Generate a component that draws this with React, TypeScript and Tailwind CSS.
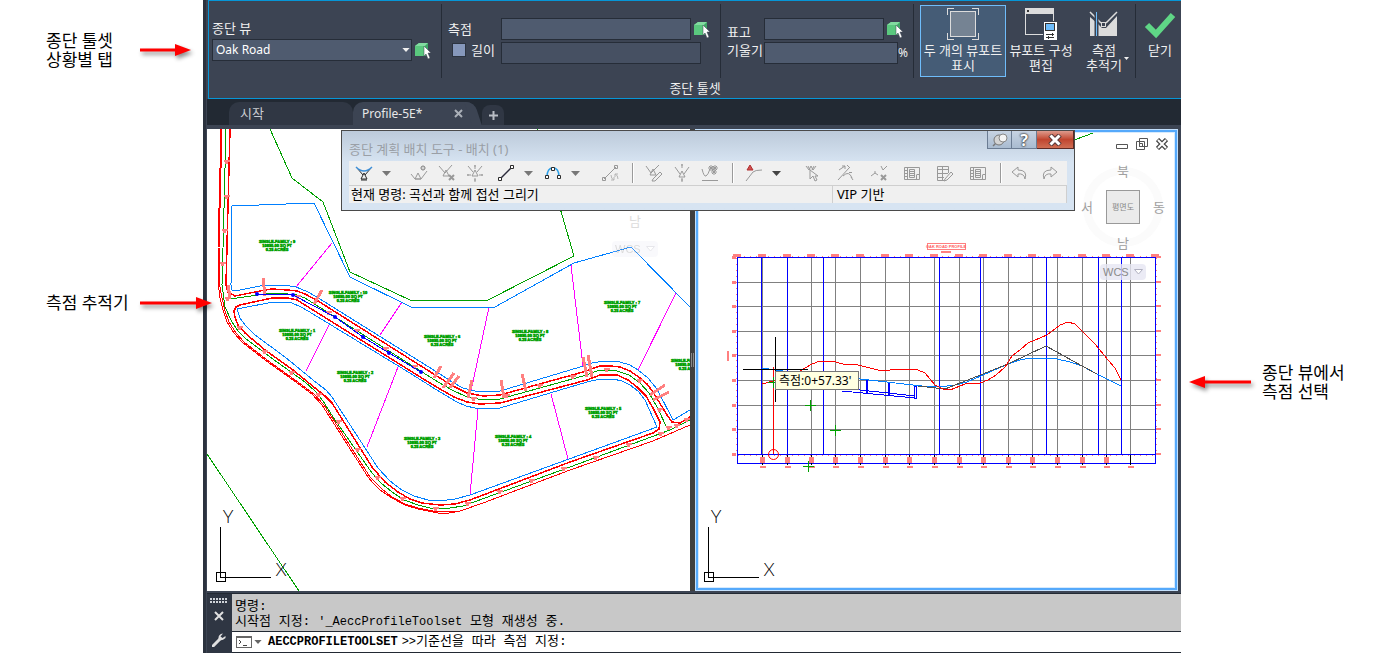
import { useState, type ReactNode } from "react";
import clsx from "clsx";

type Point = [number, number];

const toPoints = (list: Point[]) => list.map((p) => p.join(",")).join(" ");

/* ---------- plan view geometry ---------- */

const parcelBlue: Point[][] = [
  [[232, 206], [314, 203], [350, 277], [411, 307], [495, 307], [574, 263], [631, 247], [690, 307]],
  [[232, 206], [231, 285], [232, 290], [235, 291], [255, 287], [265, 285], [283, 285], [296, 287], [308, 292], [320, 299], [440, 374], [452, 382], [463, 388], [475, 391], [500, 391], [580, 367], [592, 363], [605, 361], [620, 362], [630, 365], [638, 370], [648, 378], [657, 389], [673, 420], [690, 410]],
  [[237, 309], [273, 302], [282, 302], [292, 303], [301, 307], [308, 311], [405, 370], [440, 392], [457, 402], [466, 406], [475, 408], [500, 408], [550, 393], [587, 382], [600, 379], [613, 379], [622, 381], [630, 385], [638, 391], [645, 400], [657, 427], [569, 459], [470, 495], [455, 499], [440, 501], [428, 500], [414, 496], [402, 490], [390, 481], [378, 468], [332, 397], [326, 390], [318, 384], [285, 357], [255, 335], [245, 325], [240, 318], [237, 309]],
];

const outerCurb: Point[][] = [
  [[221, 129], [218, 248], [218, 282], [220, 298], [223, 310], [227, 322], [234, 333], [242, 342], [265, 360], [300, 385], [312, 394], [322, 405], [338, 430], [368, 477], [373, 483], [380, 490], [392, 498], [405, 505], [418, 509], [438, 513], [449, 513], [460, 511], [483, 503], [570, 470], [653, 441], [690, 425]],
  [[222, 129], [219, 248], [219, 282], [222, 298], [225, 311], [229, 322], [236, 333], [244, 342], [267, 360], [302, 385], [314, 394], [324, 405], [340, 430], [370, 477], [375, 482], [382, 489], [392, 497], [405, 504], [418, 508], [438, 512], [460, 511]],
];

const curbRed: Point[][] = [
  [[230, 129], [228, 205], [226, 285], [228, 292], [235, 296], [255, 292], [265, 290], [272, 289], [288, 290], [297, 291], [305, 294], [318, 301], [440, 378], [453, 386], [467, 393], [483, 396], [500, 395], [583, 372], [600, 366], [610, 366], [620, 367], [630, 371], [640, 378], [647, 384], [653, 392], [667, 415], [672, 422], [680, 423], [690, 417]],
  [[235, 317], [234, 311], [236, 307], [240, 305], [272, 298], [288, 298], [297, 300], [305, 305], [425, 380], [440, 389], [454, 397], [467, 402], [480, 404], [500, 403], [587, 380], [600, 375], [617, 375], [628, 380], [637, 387], [646, 396], [653, 408], [660, 422], [659, 429], [653, 433], [570, 462], [470, 500], [455, 504], [440, 505], [422, 503], [410, 499], [398, 492], [385, 482], [372, 467], [332, 403], [325, 396], [315, 388], [293, 370], [265, 350], [245, 333], [238, 325], [235, 317]],
];

const centerGreen: Point[][] = [
  [[226, 129], [223, 248], [222, 285], [225, 307], [232, 322], [238, 331], [245, 338], [270, 357], [305, 382], [315, 391], [323, 401], [335, 420], [372, 473], [381, 483], [392, 492], [404, 500], [418, 505], [430, 508], [450, 508], [463, 506], [570, 467], [670, 430], [690, 420]],
  [[230, 299], [272, 293], [288, 294], [297, 295], [305, 298], [438, 382], [452, 390], [467, 397], [483, 400], [500, 399], [583, 376], [600, 370], [617, 371], [629, 375], [640, 383], [649, 393], [657, 407], [668, 430]],
  [[270, 129], [292, 178], [323, 202], [350, 272], [410, 300], [488, 300], [574, 256], [537, 129]],
  [[207, 454], [299, 591]],
];

const lotLines: Point[][] = [
  [[332, 243], [296, 287]],
  [[402, 302], [380, 335]],
  [[489, 307], [471, 391]],
  [[571, 265], [583, 366]],
  [[676, 293], [638, 370]],
  [[329, 325], [306, 371]],
  [[398, 367], [367, 447]],
  [[478, 409], [470, 495]],
  [[551, 394], [568, 459]],
];

const trackedPath: Point[] = [[257, 294], [293, 295], [335, 317], [363, 337], [389, 353], [421, 372]];

const stationStrokes: Point[][] = [
  [[263, 278], [265, 296]],
  [[228, 285], [230, 298]],
  [[322, 290], [314, 304]],
  [[441, 366], [434, 378]],
  [[454, 373], [443, 388]],
  [[459, 376], [450, 388]],
  [[472, 380], [468, 398]],
  [[501, 380], [504, 398]],
  [[522, 374], [526, 391]],
  [[583, 357], [587, 377]],
  [[588, 355], [592, 377]],
  [[665, 385], [650, 395]],
  [[669, 392], [653, 400]],
];

const stationTicks: Point[] = [
  [227, 160], [227, 195], [225, 229], [223, 262], [228, 297], [298, 295], [329, 311], [357, 329], [386, 347], [415, 365],
  [474, 397], [507, 394], [540, 384], [573, 375], [607, 368], [640, 379], [660, 408], [669, 426], [661, 432],
  [240, 326], [265, 350], [292, 371], [319, 393], [339, 420], [358, 448], [378, 476], [403, 497], [436, 507],
  [468, 502], [500, 490], [532, 479], [564, 467], [596, 456], [629, 443], [677, 424], [687, 418],
];

const lots: { x: number; y: number; no: number }[] = [
  { x: 277, y: 243, no: 9 },
  { x: 348, y: 294, no: 10 },
  { x: 297, y: 332, no: 1 },
  { x: 355, y: 374, no: 2 },
  { x: 442, y: 338, no: 6 },
  { x: 530, y: 333, no: 8 },
  { x: 622, y: 304, no: 7 },
  { x: 690, y: 362, no: 11 },
  { x: 603, y: 410, no: 5 },
  { x: 513, y: 438, no: 4 },
  { x: 422, y: 440, no: 3 },
];

/* ---------- profile view geometry ---------- */

const gridX = [762, 787, 811, 835, 860, 885, 909, 934, 959, 983, 1008, 1032, 1057, 1082, 1106, 1130];
const gridY = [282, 306, 331, 355, 380, 405, 429];
const profileStops = [761, 787, 823, 939, 980, 1046, 1098, 1121];

const surfaceProfile: Point[] = [
  [762, 384], [773, 381], [785, 377], [800, 371], [805, 368], [812, 364], [820, 361], [832, 361], [843, 364], [858, 365],
  [882, 371], [898, 369], [918, 370], [925, 373], [935, 385], [943, 389], [950, 390], [965, 384], [980, 383], [988, 380],
  [996, 375], [1005, 367], [1012, 356], [1020, 350], [1028, 343], [1047, 335], [1060, 325], [1068, 322], [1075, 324],
  [1095, 344], [1108, 360], [1115, 368], [1121, 380],
];
const designProfile: Point[] = [
  [762, 368], [783, 371], [860, 379], [922, 386], [939, 387], [955, 385], [967, 382], [983, 375], [1008, 364], [1020, 360],
  [1030, 358], [1046, 358], [1057, 359], [1070, 362], [1082, 366], [1097, 374], [1121, 386],
];
const tangents: Point[] = [[918, 386], [945, 389], [1008, 364], [1046, 346], [1082, 366], [1097, 374]];
const greenCrosses: Point[] = [[773, 382], [810, 405], [835, 430], [808, 466]];

function Lines({ items, stroke, width = 1 }: { items: Point[][]; stroke: string; width?: number }) {
  return (
    <g fill="none" stroke={stroke} strokeWidth={width}>
      {items.map((line, i) => (
        <polyline key={i} points={toPoints(line)} />
      ))}
    </g>
  );
}

function UcsIcon({ x }: { x: number }) {
  return (
    <g transform={`translate(${x} 0)`}>
      <g fill="none" stroke="#000" shapeRendering="crispEdges">
        <rect x="9.5" y="572.5" width="9" height="9" />
        <path d="M13.5 527V577.5H64" />
      </g>
      <g className="font-['Lato'] text-[18px] font-light" textAnchor="middle">
        <text x="21" y="523">Y</text>
        <text x="74" y="576">X</text>
      </g>
    </g>
  );
}

function PlanDrawing() {
  return (
    <svg viewBox="207 129 483 462" preserveAspectRatio="xMinYMin slice" className="block h-[462px] w-full">
      <g shapeRendering="crispEdges">
        <Lines items={centerGreen} stroke="#00a000" />
        <Lines items={lotLines} stroke="#ff00ff" />
        <Lines items={parcelBlue} stroke="#007fff" />
        <Lines items={outerCurb} stroke="#ff0000" />
        <Lines items={curbRed} stroke="#ff0000" width={1.5} />
        <Lines items={stationStrokes} stroke="#ff8080" width={3} />
        {stationTicks.map(([x, y]) => (
          <path key={`${x}-${y}`} d={`M${x - 3} ${y}h6v2h-2v2h-3v-2h-1z`} fill="#ff8080" />
        ))}
        <polyline points={toPoints(trackedPath)} fill="none" stroke="#0000ff" />
      </g>
      {trackedPath.map(([x, y]) => (
        <circle key={x} cx={x} cy={y} r="2" fill="#0000ff" />
      ))}
      <g className="font-['Liberation_Sans'] text-[4px] font-bold" textAnchor="middle" fill="#00a000" stroke="#00a000" strokeWidth="0.5">
        {lots.map((lot) => (
          <g key={lot.no}>
            <text x={lot.x} y={lot.y}>SINGLE-FAMILY : {lot.no}</text>
            <text x={lot.x} y={lot.y + 4}>10890.00 SQ FT</text>
            <text x={lot.x} y={lot.y + 8}>0.25 ACRES</text>
          </g>
        ))}
      </g>
      <UcsIcon x={207} />
    </svg>
  );
}

function ProfileDrawing() {
  return (
    <svg viewBox="699 133 475 454" preserveAspectRatio="xMinYMin slice" className="block h-[454px] w-full">
      <g shapeRendering="crispEdges">
        <path d="M1074 140L1104 129" stroke="#00a000" />
        <g fill="#808080">
          {gridX.map((x) => (
            <rect key={x} x={x} y="257" width="1" height="198" />
          ))}
          {gridY.map((y) => (
            <rect key={y} x="738" y={y} width="418" height="1" />
          ))}
        </g>
        {/* station and elevation ticks around the grid */}
        <g fill="#ff8080">
          {[737, ...gridX, 1155].map((x) => (
            <rect key={x} x={x - 4} y="254" width="8" height="3" />
          ))}
          {gridX.slice(0, 15).map((x) => (
            <rect key={x} x={x - 2} y="457" width="5" height="6" />
          ))}
          {gridX.map((x) => (
            <rect key={x} x={x - 2} y="466" width="6" height="2" />
          ))}
          {[257, ...gridY, 454].map((y) => (
            <g key={y}>
              <rect x="732" y={y - 1} width="4" height="3" />
              <rect x="1156" y={y - 1} width="5" height="2" />
            </g>
          ))}
          <rect x="727" y="351" width="2" height="10" />
          <rect x="941" y="251" width="10" height="2" />
        </g>
        <g stroke="#ff8080" fill="none">
          <path d="M738 256.5H1155" strokeDasharray="1 5" />
          <path d="M738 455.5H1155" strokeDasharray="1 5" />
          <path d="M736.5 258V454" strokeDasharray="1 5" />
          <path d="M1156.5 258V454" strokeDasharray="1 5" />
          <rect x="927.5" y="243.5" width="38" height="6" />
        </g>
        <g fill="#0000ff">
          {profileStops.map((x) => (
            <rect key={x} x={x} y="257" width="1" height="198" />
          ))}
        </g>
        <g stroke="#0000ff" fill="none">
          <rect x="737.5" y="257.5" width="418" height="206" />
          <path d="M738 454.5H1155" />
        </g>
        <g fill="#000">
          {gridX.map((x) => (
            <g key={x}>
              <rect x={x} y="455" width="1" height="2" />
              <rect x={x} y="463" width="1" height="2" />
            </g>
          ))}
          <rect x="1130" y="455" width="1" height="9" />
        </g>
        <Lines items={[designProfile]} stroke="#007fff" />
        <Lines items={[tangents]} stroke="#505050" />
        <Lines items={[surfaceProfile]} stroke="#ff0000" />
        <g stroke="#0000ff" fill="none">
          <path d="M842 388L915 396M842 391L915 398" />
          <path d="M867 380v13M889 383v12" strokeWidth="2" />
          <rect x="914.5" y="386.5" width="2" height="12" />
        </g>
        <path d="M773.5 367V454" stroke="#ff0000" />
        <g stroke="#00a000">
          {greenCrosses.map(([x, y]) => (
            <path key={x} d={`M${x - 5} ${y + 0.5}h11M${x + 0.5} ${y - 5}v11`} />
          ))}
        </g>
        <path d="M743 369.5H808M775.5 337V402" stroke="#000" />
      </g>
      <circle cx="773.5" cy="454.5" r="5" fill="none" stroke="#ff0000" />
      <text x="946" y="248" textAnchor="middle" fill="#ff6060" className="font-['Liberation_Sans'] text-[4px] font-bold">
        OAK ROAD PROFILE
      </text>
      <UcsIcon x={695} />
    </svg>
  );
}

/* ---------- small icons ---------- */

function Caret({ className = "h-[5px] w-[9px]" }: { className?: string }) {
  return (
    <svg viewBox="0 0 9 5" className={className}>
      <path d="M0 0H9L4.500 5Z" fill="currentColor" />
    </svg>
  );
}

function PickIcon() {
  return (
    <svg viewBox="0 0 17 17" className="size-[17px]">
      <path d="M0 4L4 1H13V11L10 14H0Z" fill="#5ac87e" />
      <path d="M0 4L4 1H13L10 4Z" fill="#82dba0" />
      <path d="M10 4L13 1V11L10 14Z" fill="#3fa566" />
      <path d="M9 4L16 11H13L15 16L13 17L11 12L9 14Z" fill="#fff" stroke="#3c4453" strokeWidth="0.500" />
    </svg>
  );
}

function PickButton({ label }: { label: string }) {
  return (
    <button type="button" aria-label={label} className="ml-[3px] shrink-0">
      <PickIcon />
    </button>
  );
}

const Tri = ({ x = 9, y = 8 }: { x?: number; y?: number }) => <path d={`M${x} ${y}l-3 6h6z`} />;

const Burst = ({ x, y }: { x: number; y: number }) => (
  <path d={`M${x - 3} ${y}h6M${x} ${y - 3}v6M${x - 2} ${y - 2}l4 4M${x + 2} ${y - 2}l-4 4`} />
);

const Sheet = () => (
  <>
    <path d="M1.500 3.500H16.500V15.500H1.500ZM4.500 3.500V15.500M13.500 10.500H16.500" />
    <path d="M6.500 5.500H11.500V13.500H6.500ZM7 7.500h4M7 9.500h4M7 11.500h4M2 6.500h2M2 9.500h2M2 12.500h2M13.500 11v4" />
  </>
);

const toolIcons: Record<string, ReactNode> = {
  tangents: (
    <>
      <path d="M2 4L8 11M16 4L10 11" />
      <Tri y={9} />
      <path d="M6 16h6" />
      <path d="M1 3Q9 11 17 3" stroke="#3c8fd9" strokeWidth="1.500" />
    </>
  ),
  insertPvi: (
    <>
      <path d="M1 10L5 15H11L17 7" />
      <Tri x={8} y={9} />
      <Burst x={13} y={4} />
      <circle cx="13" cy="4" r="1.500" fill="#f0f0f0" />
    </>
  ),
  deletePvi: (
    <>
      <path d="M1 2L7 9L14 1" />
      <Tri x={8} y={6} />
      <path d="M11 11l5 5M16 11l-5 5" strokeWidth="2" />
    </>
  ),
  movePvi: (
    <>
      <path d="M2 2L7 8M16 2L11 8M9 1v4M9 14v4M1 11h4M13 11h4" />
      <path d="M8 2h2M8 16h2M2 10v2M16 10v2" />
      <Tri y={6} />
    </>
  ),
  tangent: (
    <>
      <path d="M3 15L15 3" stroke="#2b2b3b" strokeWidth="1.500" />
      <path d="M1.500 13.500h3v3h-3zM13.500 1.500h3v3h-3z" fill="#fff" />
    </>
  ),
  curve: (
    <>
      <path d="M3 13Q3 4 9 4T15 13" stroke="#2a9fe8" strokeWidth="1.500" />
      <path d="M1.500 11.500h3v3h-3zM13.500 11.500h3v3h-3zM7.500 3.500h3v3h-3z" fill="#fff" />
    </>
  ),
  convert: (
    <>
      <path d="M3 15L15 3M1.500 13.500h3v3h-3zM13.500 1.500h3v3h-3z" />
      <path d="M10 11q0 4 3 5M17 15q0-4-3-5M13 13v3h-3M14 13v-3h3" stroke="#b5b5b5" />
    </>
  ),
  editPvi: (
    <>
      <path d="M1 2L6 9L14 1" />
      <Tri x={8} y={5} />
      <path d="M8 15L15 8L17 10L10 17L7 17Z" fill="#f0f0f0" />
    </>
  ),
  raisePvi: (
    <>
      <path d="M2 3L7 10M16 3L11 10M9 0v4M9 14v4M8 1h2M8 16h2" />
      <Tri y={7} />
    </>
  ),
  pviGroup: (
    <>
      <path d="M1 5Q3 13 5 12T9 5M1 16.500h16" />
      <Burst x={10} y={4} />
      <Burst x={14} y={4} />
      <Burst x={13} y={8} />
    </>
  ),
  marker: (
    <>
      <path d="M1 17L8 8Q10 6 17 6" />
      <path d="M5 1l-3 5h6z" fill="#d05050" stroke="#b03030" />
    </>
  ),
  select: (
    <>
      <path d="M2 2l3 4 2-4 2 4 3-4M4 2l2 4M10 2l-2 4" />
      <path d="M6 6V15L9 12L11 17L13 16L11 12H14Z" fill="#f0f0f0" />
    </>
  ),
  selectPart: <path d="M1 16L12 4M2 6l6-4M5 2h3v3M6 12Q12 6 15 14M12 8.500h3M14 13l2 3M10 1l3 3" />,
  deletePart: (
    <>
      <path d="M1 12l4-3 3 2M11 2l2 4 4-4M5 9v-2" />
      <path d="M11 11l5 5M16 11l-5 5" strokeWidth="2" />
    </>
  ),
  sheet: <Sheet />,
  grid: (
    <>
      <path d="M1.500 2.500H12.500V9M1.500 2.500V16.500H8M1.500 5.500H12.500M1.500 9.500H12M1.500 13.500H8M6.500 2.500V16.500" />
      <path d="M9 15L15 8L17 10L11 16L8 17Z" fill="#f0f0f0" />
    </>
  ),
  undo: <path d="M8 3L2 8L8 13V10Q14 9 15 15Q18 6 8 6Z" />,
  redo: <path d="M10 3L16 8L10 13V10Q4 9 3 15Q0 6 10 6Z" />,
};

type Tool = { icon?: string; label?: string; kind?: "caret" | "sep"; active?: boolean; space?: string };

const tools: Tool[] = [
  { icon: "tangents", label: "접선 그리기", active: true },
  { kind: "caret", label: "접선 옵션" },
  { icon: "insertPvi", label: "VIP 삽입", space: "ml-[11px]" },
  { icon: "deletePvi", label: "VIP 삭제" },
  { icon: "movePvi", label: "VIP 이동" },
  { icon: "tangent", label: "고정 접선", active: true, space: "ml-[3px]" },
  { kind: "caret", label: "고정 접선 옵션" },
  { icon: "curve", label: "곡선", active: true, space: "ml-[3px]" },
  { kind: "caret", label: "곡선 옵션" },
  { icon: "convert", label: "선 변환", space: "ml-[13px]" },
  { kind: "sep", space: "ml-2" },
  { icon: "editPvi", label: "VIP 편집", space: "ml-[6px]" },
  { icon: "raisePvi", label: "VIP 올리기" },
  { icon: "pviGroup", label: "VIP 그룹" },
  { kind: "sep", space: "ml-2" },
  { icon: "marker", label: "종단 매개변수", space: "ml-[6px]" },
  { kind: "caret", label: "매개변수 옵션", active: true },
  { icon: "select", label: "VIP 선택", space: "ml-[15px]" },
  { icon: "selectPart", label: "하위 요소 선택", space: "ml-[5px]" },
  { icon: "deletePart", label: "하위 요소 삭제", space: "ml-[5px]" },
  { icon: "sheet", label: "하위 요소 편집기", space: "ml-[5px]" },
  { icon: "grid", label: "종단 그리드 뷰", space: "ml-[5px]" },
  { icon: "sheet", label: "배치 매개변수", space: "ml-[5px]" },
  { kind: "sep", space: "ml-2" },
  { icon: "undo", label: "명령취소", space: "ml-[3px]" },
  { icon: "redo", label: "명령복구", space: "ml-[3px]" },
];

function LayoutToolbar() {
  return (
    <section className="absolute left-[134px] top-px z-10 w-[734px] border border-[#4a4a4a] bg-linear-to-b from-[#bccada] from-0% to-[#d7e4f2] to-40% px-[7px] pb-[7px]">
      <header className="flex h-[30px] items-start justify-between">
        <h2 className="pt-[10px] text-[13px] leading-4 text-[#9a9fa6]">종단 계획 배치 도구 - 배치 (1)</h2>
        <div className="-mr-[7px] flex h-[18px]">
          <button type="button" aria-label="고정" className="flex w-[25px] items-center justify-center border border-t-0 border-[#6b7c93] bg-linear-to-b from-[#c7d3e2] to-[#a9bbd0]">
            <svg viewBox="0 0 16 14" className="h-[14px] w-4">
              <path d="M1 13L6 8" stroke="#777" strokeWidth="1.500" />
              <circle cx="7" cy="7" r="5" fill="#d4d4d4" stroke="#777" />
              <circle cx="11" cy="5" r="4" fill="#f4f4f4" stroke="#888" />
            </svg>
          </button>
          <button type="button" aria-label="도움말" className="w-[25px] border border-l-0 border-t-0 border-[#6b7c93] bg-linear-to-b from-[#c7d3e2] to-[#a9bbd0] text-[16px] leading-4 font-bold text-white [text-shadow:0_0_2px_#222,0_0_2px_#222]">
            ?
          </button>
          <button type="button" aria-label="닫기" className="flex w-[37px] items-center justify-center border border-l-0 border-t-0 border-[#5e2a24] bg-linear-to-b from-[#dd9a8c] from-0% via-[#c0452f] via-50% to-[#cf6d53] to-100%">
            <svg viewBox="0 0 14 12" className="h-3 w-[14px]">
              <path d="M2 1L12 11M12 1L2 11" stroke="#5a3a3a" strokeWidth="5" />
              <path d="M2.500 1.500L11.500 10.500M11.500 1.500L2.500 10.500" stroke="#fff" strokeWidth="3" />
            </svg>
          </button>
        </div>
      </header>
      <div className="flex h-[25px] items-center border-b border-[#cfcfcf] bg-[#f0f0f0] pl-px">
        {tools.map((tool, i) => {
          if (tool.kind === "sep") return <span key={i} className={clsx("h-5 w-[2px] shrink-0 border-l border-[#9a9a9a] bg-white", tool.space)} />;
          if (tool.kind === "caret") {
            return (
              <button key={i} type="button" aria-label={tool.label} className={clsx("flex w-4 shrink-0 justify-center", tool.active ? "text-[#444]" : "text-[#777]")}>
                <Caret />
              </button>
            );
          }
          return (
            <button key={i} type="button" aria-label={tool.label} className={clsx("flex w-7 shrink-0 justify-center", tool.space)}>
              <svg viewBox="0 0 18 18" className="size-[18px]" fill="none" stroke={tool.active ? "#2b2b2b" : "#999"}>
                {toolIcons[tool.icon!]}
              </svg>
            </button>
          );
        })}
      </div>
      <div className="flex bg-[#f0f0f0] text-[13px] leading-[17px] text-black">
        <p className="w-[484px] border-r border-[#cfcfcf] pl-[2px]">현재 명령: 곡선과 함께 접선 그리기</p>
        <p className="flex-1 border-r border-[#cfcfcf] pl-1">VIP 기반</p>
      </div>
    </section>
  );
}

/* ---------- ribbon ---------- */

const fieldClass = "h-[22px] border border-[#262d38] px-1 text-xs text-white outline-none";

function Divider() {
  return <span className="w-px shrink-0 bg-[#252c37]" />;
}

function RibbonButton({ children, icon, className, pressed, caret }: { children: ReactNode; icon: ReactNode; className: string; pressed?: boolean; caret?: boolean }) {
  return (
    <button
      type="button"
      aria-pressed={pressed}
      className={clsx(
        "relative mt-px flex h-[72px] shrink-0 flex-col items-center border pt-[2px]",
        pressed ? "border-[#6fbdfb] bg-[#455c76]" : "border-transparent",
        className,
      )}
    >
      <svg viewBox="0 0 32 32" className="size-8 shrink-0" fill="none">
        {icon}
      </svg>
      <span className="mt-[3px] text-center text-[13px] leading-[15px] whitespace-nowrap">{children}</span>
      {caret && <Caret className="absolute -right-1 bottom-[16px] h-[3px] w-[5px]" />}
    </button>
  );
}

const viewportIcon = (
  <g shapeRendering="crispEdges">
    <rect x="3.500" y="3.500" width="25" height="25" fill="#758393" stroke="#dcdcdc" />
    <path d="M0.500 7V0.500H7M25 0.500H31.500V7M31.500 25V31.500H25M7 31.500H0.500V25" stroke="#dcdcdc" />
  </g>
);

const configIcon = (
  <g shapeRendering="crispEdges">
    <path d="M0.500 0.500H28V26H0.500Z" stroke="#dcdcdc" />
    <rect width="28" height="6" fill="#dcdcdc" />
    <rect x="2" y="2" width="2" height="2" fill="#333" />
    <rect x="18" y="13" width="14" height="19" fill="#fff" stroke="#3c4453" />
    <rect x="20.500" y="15.500" width="9" height="7" fill="#6fbdfb" stroke="#333" />
    <path d="M21 26.500h8M21 29.500h8M27 25v3M23 28v3" stroke="#333" />
  </g>
);

const trackerIcon = (
  <>
    <path d="M2 9L10 16L14 20H18L29 8V28H2Z" fill="#dcdcdc" />
    <path d="M2 4L13 15M18 15L29 4" stroke="#dcdcdc" strokeWidth="1.500" />
    <rect x="13.500" y="14.500" width="4" height="4" fill="#3c4453" stroke="#dcdcdc" />
    <path d="M8.500 4V28" stroke="#3c4453" strokeWidth="4" />
    <path d="M8.500 4V28" stroke="#6fbdfb" />
  </>
);

const checkIcon = <path d="M3 17L12 26L29 7" stroke="#5fd686" strokeWidth="6" />;

function Ribbon() {
  const [view, setView] = useState("Oak Road");
  return (
    <div className="ml-px border border-r-0 border-[#0696d7] bg-[#3c4453] text-[13px] leading-4 text-[#f0f0f0]">
      <div className="flex h-[77px] pt-[3px]">
        <div className="w-[232px] shrink-0 pt-4 pl-[3px]">
          <label htmlFor="profile-view" className="block">종단 뷰</label>
          <div className="mt-[3px] flex items-center">
            <div className="relative w-[200px]">
              <select
                id="profile-view"
                value={view}
                onChange={(e) => setView(e.target.value)}
                className="block h-[22px] w-full appearance-none border border-[#262d38] bg-[#4f5b6f] px-[3px] text-xs text-white outline-none"
              >
                <option>Oak Road</option>
              </select>
              <Caret className="pointer-events-none absolute top-[9px] right-[2px] h-[4px] w-[8px]" />
            </div>
            <PickButton label="종단 뷰 선택" />
          </div>
        </div>
        <Divider />
        <div className="flex w-[278px] shrink-0 flex-col gap-[2px] pt-[14px] pl-[6px]">
          <div className="flex items-center">
            <label htmlFor="station" className="w-[53px]">측점</label>
            <input id="station" className={clsx(fieldClass, "w-[190px] bg-[#4f5b6f]")} />
            <PickButton label="측점 선택" />
          </div>
          <div className="flex items-start">
            <label className="flex w-[53px] items-center gap-[5px] pl-1">
              <input type="checkbox" className="size-[14px] appearance-none border border-[#2c3440] bg-[#8698bb] checked:bg-[#6fbdfb]" />
              길이
            </label>
            <input aria-label="길이" className={clsx(fieldClass, "w-[200px] bg-[#465062]")} />
          </div>
        </div>
        <Divider />
        <div className="flex w-[192px] shrink-0 flex-col gap-[2px] pt-[14px] pl-[6px]">
          <div className="flex items-center">
            <label htmlFor="elevation" className="w-[37px] self-end">표고</label>
            <input id="elevation" className={clsx(fieldClass, "w-[120px] bg-[#4f5b6f]")} />
            <PickButton label="표고 선택" />
          </div>
          <div className="flex items-center">
            <label htmlFor="grade" className="w-[37px] self-start">기울기</label>
            <input id="grade" className={clsx(fieldClass, "w-[134px] bg-[#4f5b6f]")} />
            <span className="text-xs">%</span>
          </div>
        </div>
        <Divider />
        <div className="flex shrink-0 pr-[9px] pl-[6px]">
          <RibbonButton icon={viewportIcon} className="w-[86px]" pressed>
            두 개의 뷰포트<br />표시
          </RibbonButton>
          <RibbonButton icon={configIcon} className="ml-[2px] w-[66px]">
            뷰포트 구성<br />편집
          </RibbonButton>
          <RibbonButton icon={trackerIcon} className="ml-2 w-[44px]" caret>
            측점<br />추적기
          </RibbonButton>
        </div>
        <Divider />
        <RibbonButton icon={checkIcon} className="ml-1 w-10">닫기</RibbonButton>
      </div>
      <p className="pt-[2px] pb-[2px] text-center">종단 툴셋</p>
    </div>
  );
}

function FileTabs() {
  return (
    <nav className="flex h-[26px] items-end bg-[#222933] pl-[22px] text-xs text-[#e8e8e8]">
      <button type="button" className="h-[23px] w-[124px] rounded-t-[10px] bg-[#303744] pl-[11px] text-left text-[13px] text-[#c9ccd1]">시작</button>
      <div className="relative flex h-[23px] w-[123px] items-center justify-between rounded-t-[10px] bg-[#3c4453] pr-[13px] pl-[9px] after:absolute after:inset-y-0 after:-right-[2px] after:w-[10px] after:skew-x-[18deg] after:rounded-tr-[8px] after:bg-[#3c4453]">
        <button type="button">Profile-5E*</button>
        <button type="button" aria-label="탭 닫기">
          <svg viewBox="0 0 9 9" className="size-[9px]">
            <path d="M1 1L8 8M8 1L1 8" stroke="#aab0b8" strokeWidth="2" />
          </svg>
        </button>
      </div>
      <button type="button" aria-label="새 탭" className="ml-[6px] flex h-[20px] w-[22px] items-center justify-center rounded-t-[8px] bg-[#303744]">
        <svg viewBox="0 0 9 9" className="size-[9px]">
          <path d="M4.500 0V9M0 4.500H9" stroke="#b9bec5" strokeWidth="2" />
        </svg>
      </button>
    </nav>
  );
}

/* ---------- viewports ---------- */

function WcsButton({ className }: { className?: string }) {
  return (
    <button type="button" className={clsx("absolute flex h-4 w-[46px] items-center justify-between rounded-sm bg-[#e6e6f2]/80 px-[3px] font-['Liberation_Sans'] text-[11px] text-[#8a8a8a]", className)}>
      WCS
      <svg viewBox="0 0 9 6" className="h-[6px] w-[9px]">
        <path d="M0.500 0.500H8.500L4.500 5Z" fill="#fff" stroke="#b0b0c0" />
      </svg>
    </button>
  );
}

function ViewCube() {
  return (
    <div className="absolute top-[30px] right-[7px] grid size-[88px] grid-cols-[16px_1fr_16px] grid-rows-[16px_1fr_16px] place-items-center text-[13px] leading-4 text-[#a0a0a0]">
      <span className="absolute inset-1 rounded-full border-[8px] border-[#fbfbfb]" />
      <span className="relative col-start-2">북</span>
      <span className="relative col-start-1 row-start-2">서</span>
      <button type="button" className="relative col-start-2 row-start-2 size-[34px] border border-[#999] bg-[#ebebeb] text-[8px] text-[#888]">평면도</button>
      <span className="relative col-start-3 row-start-2">동</span>
      <span className="relative col-start-2 row-start-3">남</span>
    </div>
  );
}

function WindowControls() {
  return (
    <div className="absolute top-[5px] right-[6px] flex gap-2">
      <button type="button" aria-label="최소화">
        <svg viewBox="0 0 12 12" className="size-3" fill="#fff" stroke="#555">
          <path d="M0.500 6.500h11v4h-11z" />
        </svg>
      </button>
      <button type="button" aria-label="복원">
        <svg viewBox="0 0 12 12" className="size-3" fill="#fff" stroke="#555">
          <path d="M3.500 0.500h8v8h-8zM0.500 3.500h8v8h-8zM3.500 5.500h3v3h-3z" />
        </svg>
      </button>
      <button type="button" aria-label="닫기">
        <svg viewBox="0 0 12 12" className="size-3">
          <path d="M1.500 1.500L10.500 10.500M10.500 1.500L1.500 10.500" stroke="#444" strokeWidth="4.500" />
          <path d="M2 2L10 10M10 2L2 10" stroke="#fff" strokeWidth="2" />
        </svg>
      </button>
    </div>
  );
}

function Viewports() {
  return (
    <div className="relative mr-[3px] grid grid-cols-[minmax(0,1fr)_5px_minmax(0,1fr)] bg-[#3f3f3f]">
      <div className="relative overflow-hidden bg-white">
        <PlanDrawing />
        <span className="absolute top-[84px] right-[49px] text-[13px] leading-4 text-[#dcdcdc]">남</span>
        <WcsButton className="top-[112px] right-8 opacity-30" />
      </div>
      <div className="flex items-center justify-center gap-px">
        <span className="h-[14px] w-px bg-[#888]" />
        <span className="h-[14px] w-px bg-[#888]" />
      </div>
      <div className="border border-[#c3e0fc] bg-white">
        <div className="border-2 border-[#55a9fb]">
          <div className="relative overflow-hidden border border-[#d6eafd]">
            <ProfileDrawing />
            <ViewCube />
            <WindowControls />
            <WcsButton className="top-[131px] right-7" />
            <div role="tooltip" className="absolute top-[238px] left-[76px] w-[84px] border border-[#767676] bg-[#ffffe1] pl-[3px] text-xs leading-[17px] text-black">
              측점:0+57.33'
            </div>
          </div>
        </div>
      </div>
      <LayoutToolbar />
    </div>
  );
}

/* ---------- command line ---------- */

function CommandLine() {
  return (
    <div className="flex border-t border-[#222933] font-['Liberation_Mono','Noto_Sans_CJK_KR',monospace] text-[13px] leading-[15px] text-black">
      <div className="flex w-[25px] shrink-0 flex-col items-center bg-[#2f3643] pt-1 pr-[2px]">
        <svg viewBox="0 0 17 5" className="h-[5px] w-[17px]">
          <path d="M0 1H17M0 4H17" stroke="#d0d4da" strokeWidth="2" strokeDasharray="2 1" />
        </svg>
        <button type="button" aria-label="명령행 닫기" className="mt-2">
          <svg viewBox="0 0 10 10" className="size-[10px]">
            <path d="M1 1L9 9M9 1L1 9" stroke="#e0e0e0" strokeWidth="2" />
          </svg>
        </button>
        <button type="button" aria-label="사용자화" className="mt-3">
          <svg viewBox="0 0 14 14" className="size-[14px]">
            <path d="M1 13L8 6" stroke="#e0e0e0" strokeWidth="3" strokeLinecap="round" />
            <path d="M11 0.500Q6 1 6.500 6Q9 9 13.500 5V3L10.500 5L8.500 3.500Z" fill="#e0e0e0" />
          </svg>
        </button>
      </div>
      <div className="min-w-0 flex-1">
        <div className="border-b border-[#222933] bg-[#c8c8c8] pt-[5px] pb-[2px] pl-[3px]">
          <p>명령:</p>
          <p>
            시작점 지정: <span className="text-xs leading-none">'_AeccProfileToolset</span> 모형 재생성 중.
          </p>
        </div>
        <label className="flex h-[21px] items-center border-b border-[#222933] bg-white pl-1">
          <svg viewBox="0 0 16 12" className="h-3 w-4" shapeRendering="crispEdges">
            <rect x="0.500" y="0.500" width="15" height="11" fill="#fff" stroke="#666" />
            <path d="M1 1.500h14" stroke="#666" />
            <path d="M3 4l2 2-2 2M7 9.500h4" fill="none" stroke="#444" />
          </svg>
          <span className="ml-[2px] text-[#666]">
            <Caret className="h-1 w-2" />
          </span>
          <span className="ml-[6px] text-xs font-bold">AECCPROFILETOOLSET</span>
          <span className="ml-1 whitespace-nowrap">
            <span className="text-xs">&gt;&gt;</span>기준선을 따라 측점 지정:
          </span>
          <input aria-label="명령 입력" className="min-w-0 flex-1 bg-transparent outline-none" />
        </label>
      </div>
    </div>
  );
}

/* ---------- callouts ---------- */

function Arrow({ long, flip }: { long?: boolean; flip?: boolean }) {
  const w = long ? 72 : flip ? 62 : 51;
  return (
    <svg width={w} height="14" viewBox={`0 0 ${w} 14`} className="shrink-0 drop-shadow-[2px_3px_2px_rgba(0,0,0,0.45)]">
      <g transform={flip ? `rotate(180 ${w / 2} 7)` : undefined}>
        <path d={`M0 7H${w - 12}`} stroke="#ff0000" strokeWidth="3" />
        <path d={`M${w - 16} 1L${w} 7L${w - 16} 13Z`} fill="#ff0000" />
      </g>
    </svg>
  );
}

export default function App() {
  return (
    <div className="flex bg-white font-['Noto_Sans','Noto_Sans_CJK_KR',sans-serif] text-black">
      <aside className="relative z-20 w-[203px] shrink-0 pt-[31px] pl-[46px] text-[17px] leading-[19px]">
        <div className="flex items-center">
          <p className="w-[94px]">종단 툴셋<br />상황별 탭</p>
          <Arrow />
        </div>
        <div className="mt-[224px] -mr-3 flex items-center">
          <p className="w-[94px] shrink-0">측점 추적기</p>
          <Arrow long />
        </div>
      </aside>

      <main className="min-w-0 flex-1 overflow-hidden border-l-[3px] border-[#2b323e] bg-[#3c4453] pl-px">
        <Ribbon />
        <FileTabs />
        <div className="pt-1 pb-[2px]">
          <Viewports />
        </div>
        <CommandLine />
      </main>

      <aside className="flex w-[203px] shrink-0 items-start pt-[363px] pl-2 text-[17px] leading-[19px]">
        <div className="flex items-center gap-[11px]">
          <Arrow flip />
          <p>종단 뷰에서<br />측점 선택</p>
        </div>
      </aside>
    </div>
  );
}
